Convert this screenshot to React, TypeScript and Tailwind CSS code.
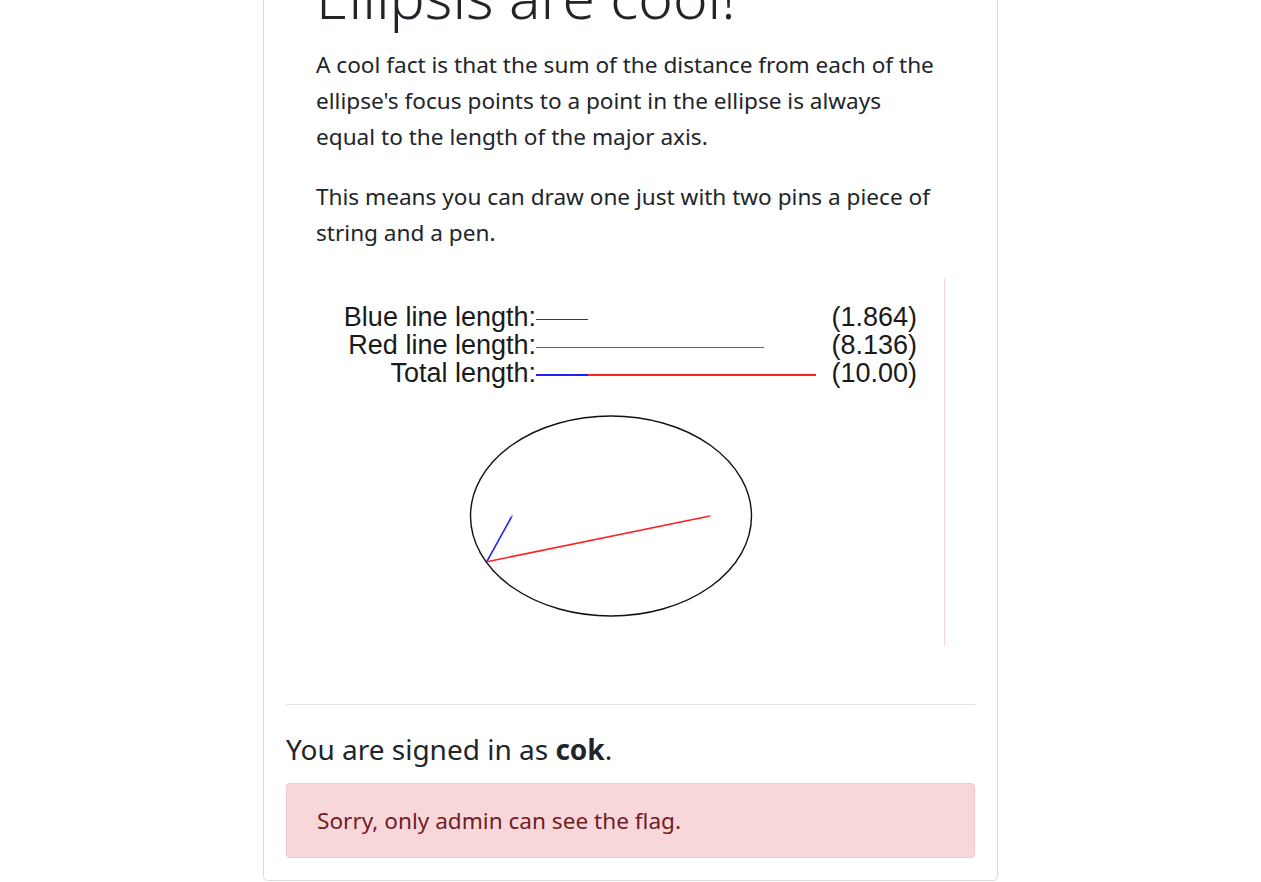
import React from "react";

const font = { fontFamily: '"Noto Sans", "Open Sans", sans-serif' };

function EllipseCanvas() {
  const cx = 295;
  const cy = 238;
  const f1x = 196;
  const f2x = 394;
  const px = 170.8;
  const py = 283.7;
  return (
    <div className="w-[629px] h-[368px] border-r border-[#f7d3d9]">
      <svg width="628" height="368" viewBox="0 0 628 368" className="block">
        <g fontFamily='"Liberation Sans", Arial, sans-serif' fontSize="27" fill="#1a1a1a">
          <text x="220" y="48" textAnchor="end">Blue line length:</text>
          <text x="220" y="76" textAnchor="end">Red line length:</text>
          <text x="220" y="104" textAnchor="end">Total length:</text>
          <text x="601" y="48" textAnchor="end">(1.864)</text>
          <text x="601" y="76" textAnchor="end">(8.136)</text>
          <text x="601" y="104" textAnchor="end">(10.00)</text>
        </g>
        <line x1="220" y1="41.5" x2="272" y2="41.5" stroke="#2020ff" strokeWidth="1" />
        <line x1="220" y1="69.5" x2="448" y2="69.5" stroke="#ff2020" strokeWidth="1" />
        <line x1="220" y1="97" x2="272" y2="97" stroke="#2020ff" strokeWidth="2" />
        <line x1="272" y1="97" x2="500" y2="97" stroke="#ff2020" strokeWidth="2" />
        <ellipse cx={cx} cy={cy} rx="140.5" ry="100" fill="none" stroke="#111" strokeWidth="1.4" />
        <line x1={f1x} y1={cy} x2={px} y2={py} stroke="#2020ff" strokeWidth="1.6" />
        <line x1={f2x} y1={cy} x2={px} y2={py} stroke="#ff2020" strokeWidth="1.6" />
        <circle cx={f1x} cy={cy} r="1.2" fill="#bbb" />
        <circle cx={f2x} cy={cy} r="1.2" fill="#bbb" />
      </svg>
    </div>
  );
}

export default function App() {
  return (
    <div className="w-[1261px] h-[882px] overflow-hidden bg-white text-[#212529]" style={font}>
      <div className="mx-auto mt-[-62px] w-[735px] rounded-[5px] border border-[#dcdcdc] px-[22px] pt-[22px] pb-[22px]">
        <div className="px-[30px]">
          <h1 className="text-[58.8px] font-light leading-[71px] mb-[15px] whitespace-nowrap">Ellipsis are cool!</h1>
          <p className="text-[22.6px] leading-[36px] mb-[24px] whitespace-nowrap">
            A cool fact is that the sum of the distance from each of the
            <br />
            ellipse's focus points to a point in the ellipse is always
            <br />
            equal to the length of the major axis.
          </p>
          <p className="text-[22.6px] leading-[36px] mb-[27px] whitespace-nowrap">
            This means you can draw one just with two pins a piece of
            <br />
            string and a pen.
          </p>
          <EllipseCanvas />
        </div>
        <hr className="mt-[58px] border-0 border-t border-[#e3e3e3]" />
        <h3 className="mt-[27px] mb-[17px] text-[28px] leading-[34px]">
          You are signed in as <b className="font-bold">cok</b>.
        </h3>
        <div className="rounded-[4px] border border-[#f5c6cb] bg-[#f8d7da] text-[#721c24] h-[75px] flex items-center px-[30px] text-[22.6px]">
          Sorry, only admin can see the flag.
        </div>
      </div>
    </div>
  );
}
